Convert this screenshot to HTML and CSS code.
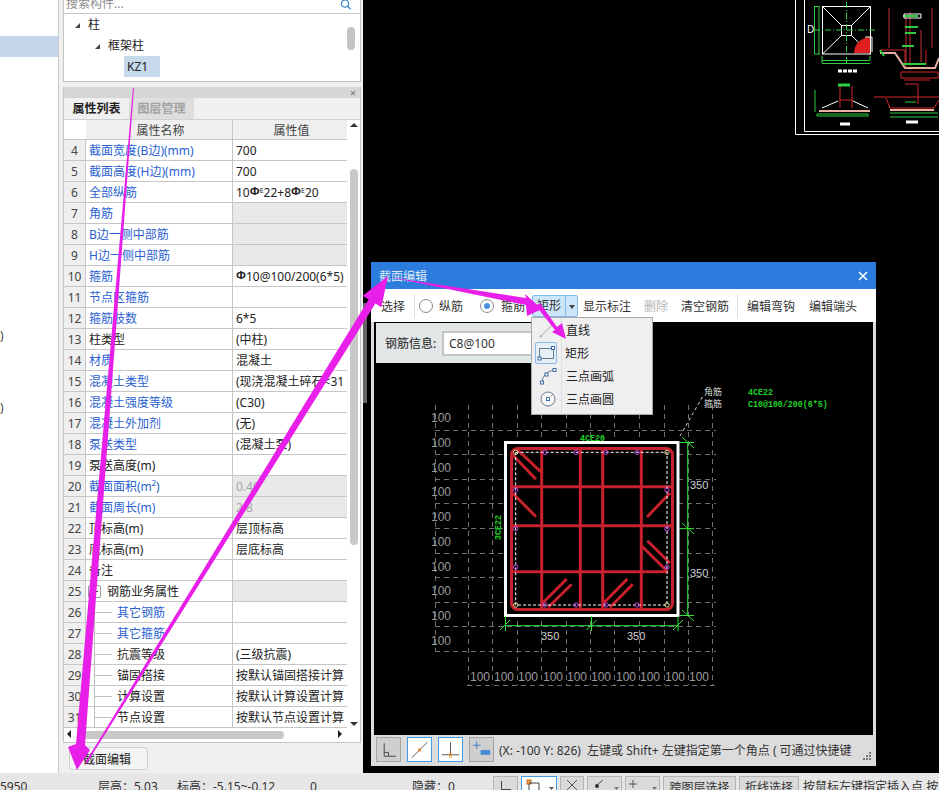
FILE: index.html
```html
<!DOCTYPE html>
<html lang="zh">
<head>
<meta charset="utf-8">
<title>截面编辑</title>
<link rel="stylesheet" href="styles.css">
</head>
<body>
<div class="app">
  <div class="main">
    <div class="nav">
      <div class="nav-sel"></div>
      <div class="nav-frag nav-frag-a">)</div>
      <div class="nav-frag nav-frag-b">)</div>
    </div>
    <div class="side">
      <div class="tree-panel">
        <div class="search">
          <span class="search-text">搜索构件...</span>
          <svg class="search-icon" width="12" height="12" viewBox="0 0 12 12"><circle cx="5" cy="3.5" r="3.6" fill="none" stroke="#3f8ad0" stroke-width="1.3"/><path d="M7.6 6.2 10.5 9" stroke="#3f8ad0" stroke-width="1.5"/></svg>
        </div>
        <div class="tree-row tree-l1"><span class="tri"></span>柱</div>
        <div class="tree-row tree-l2"><span class="tri"></span>框架柱</div>
        <div class="tree-row tree-l3"><span class="tree-sel">KZ1</span></div>
        <div class="tree-thumb"></div>
      </div>
      <div class="prop-panel">
        <div class="prop-head"><span class="prop-close">×</span></div>
        <div class="tabs"><div class="tab tab-on">属性列表</div><div class="tab">图层管理</div></div>
        <div class="grid-wrap">
          <div class="grid">
            <div class="row head"><div class="n"></div><div class="k">属性名称</div><div class="v">属性值</div></div>
            <div class="row"><div class="n">4</div><div class="k blue">截面宽度(B边)(mm)</div><div class="v">700</div></div>
            <div class="row"><div class="n">5</div><div class="k blue">截面高度(H边)(mm)</div><div class="v">700</div></div>
            <div class="row"><div class="n">6</div><div class="k blue">全部纵筋</div><div class="v">10<span class="bar">Φ</span><sup class="e">E</sup>22+8<span class="bar">Φ</span><sup class="e">E</sup>20</div></div>
            <div class="row"><div class="n">7</div><div class="k blue">角筋</div><div class="v off"></div></div>
            <div class="row"><div class="n">8</div><div class="k blue">B边一侧中部筋</div><div class="v off"></div></div>
            <div class="row"><div class="n">9</div><div class="k blue">H边一侧中部筋</div><div class="v off"></div></div>
            <div class="row"><div class="n">10</div><div class="k blue">箍筋</div><div class="v"><span class="bar">Φ</span>10@100/200(6*5)</div></div>
            <div class="row"><div class="n">11</div><div class="k blue">节点区箍筋</div><div class="v"></div></div>
            <div class="row"><div class="n">12</div><div class="k blue">箍筋肢数</div><div class="v">6*5</div></div>
            <div class="row"><div class="n">13</div><div class="k">柱类型</div><div class="v">(中柱)</div></div>
            <div class="row"><div class="n">14</div><div class="k blue">材质</div><div class="v">混凝土</div></div>
            <div class="row"><div class="n">15</div><div class="k blue">混凝土类型</div><div class="v">(现浇混凝土碎石&lt;31</div></div>
            <div class="row"><div class="n">16</div><div class="k blue">混凝土强度等级</div><div class="v">(C30)</div></div>
            <div class="row"><div class="n">17</div><div class="k blue">混凝土外加剂</div><div class="v">(无)</div></div>
            <div class="row"><div class="n">18</div><div class="k blue">泵送类型</div><div class="v">(混凝土泵)</div></div>
            <div class="row"><div class="n">19</div><div class="k">泵送高度(m)</div><div class="v"></div></div>
            <div class="row"><div class="n">20</div><div class="k blue">截面面积(m²)</div><div class="v off dim">0.49</div></div>
            <div class="row"><div class="n">21</div><div class="k blue">截面周长(m)</div><div class="v off dim">2.8</div></div>
            <div class="row"><div class="n">22</div><div class="k">顶标高(m)</div><div class="v">层顶标高</div></div>
            <div class="row"><div class="n">23</div><div class="k">底标高(m)</div><div class="v">层底标高</div></div>
            <div class="row"><div class="n">24</div><div class="k">备注</div><div class="v"></div></div>
            <div class="row"><div class="n">25</div><div class="k group"><span class="minus"></span>钢筋业务属性</div><div class="v off"></div></div>
            <div class="row"><div class="n">26</div><div class="k sub blue">其它钢筋</div><div class="v"></div></div>
            <div class="row"><div class="n">27</div><div class="k sub blue">其它箍筋</div><div class="v"></div></div>
            <div class="row"><div class="n">28</div><div class="k sub">抗震等级</div><div class="v">(三级抗震)</div></div>
            <div class="row"><div class="n">29</div><div class="k sub">锚固搭接</div><div class="v">按默认锚固搭接计算</div></div>
            <div class="row"><div class="n">30</div><div class="k sub">计算设置</div><div class="v">按默认计算设置计算</div></div>
            <div class="row"><div class="n">31</div><div class="k sub">节点设置</div><div class="v">按默认节点设置计算</div></div>
          </div>
          <div class="vbar">
            <span class="up"></span>
            <div class="vthumb"></div>
            <span class="down"></span>
          </div>
        </div>
        <div class="hbar">
          <span class="left"></span>
          <div class="hthumb"></div>
          <span class="right"></span>
        </div>
      </div>
      <div class="btn-row"><button class="sec-btn">截面编辑</button></div>
    </div>
    <div class="canvas">
      <div class="handle"></div>
      <svg class="cad" width="144" height="136" viewBox="795 0 144 136">
        <path d="M795.5 0V134.5H939M804.5 0V131.5H939" fill="none" stroke="#fff"/>
        <rect x="822.5" y="6.5" width="48" height="47.5" fill="none" stroke="#fff"/>
        <rect x="841.500" y="25.500" width="10" height="10" fill="none" stroke="#fff"/>
        <path d="M822.5 6.5 841.5 25.5M870.5 6.5 851.5 25.5M822.5 54 841.5 35.5M870.5 54 851.5 35.5" stroke="#fff" fill="none"/>
        <path d="M814 30H875M846.5 2V64" stroke="#2ecc40" stroke-dasharray="6 2 1 2"/>
        <path d="M814 6.5H820M814 54H820M814.5 6V54M819 6V54M822 60.5H870V56M822 63.500H870M822 56V63" stroke="#2ecc40" fill="none"/>
        <path d="M854 53Q855 39 870 37V53Z" fill="#e02020"/>
        <path d="M865 37H872V52" stroke="#fff" fill="none"/>
        <text x="807" y="33" class="cad-t">D</text>
        <path d="M838 71H858" stroke="#fff" stroke-width="3" stroke-dasharray="4 1"/>
        <path d="M889 8V48M932 8V48" stroke="#c03030" fill="none"/>
        <path d="M880 53H895L905 68H935L939 58" stroke="#e8b0a0" stroke-width="2" fill="none"/>
        <path d="M880 50H905V64M926 50V64" stroke="#d02828" fill="none"/>
        <path d="M906 15V68M910 12V66M921 30V62" stroke="#c03030"/>
        <path d="M903 16H918M905 27H918M905 33H916M902 46H914M903 64H926M880 50 884 56" stroke="#2ecc40" stroke-width="2"/>
        <path d="M901 72H938V78H901ZM904 80H930" stroke="#d02828" fill="none"/>
        <path d="M904 14H921V18H904Z" fill="none" stroke="#fff"/>
        <path d="M840 86V108M852 86V108M839 100H853" stroke="#d02828" fill="none"/>
        <path d="M838 85H850" stroke="#2ecc40" stroke-width="3"/>
        <path d="M822 108 838 101M853 101 868 108" stroke="#fff" fill="none"/>
        <path d="M819 111H870" stroke="#e8b0a0" stroke-width="2"/>
        <path d="M817 114H868V116H817ZM815 90V112" fill="none" stroke="#2ecc40"/>
        <path d="M874 97H939M886 98 890 108H934L939 100" stroke="#d02828" fill="none"/>
        <path d="M890 110H934" stroke="#e8b0a0" stroke-width="2" fill="none"/>
        <path d="M890 113H938M890 117H938M905 102H916" stroke="#2ecc40"/>
        <path d="M905 84H918V104" stroke="#d02828" fill="none"/>
        <path d="M840 124H850M906 122H918" stroke="#fff" stroke-width="3"/>
      </svg>
      <div class="dialog">
        <div class="d-title"><span>截面编辑</span><svg class="d-x" width="10" height="10" viewBox="0 0 10 10"><path d="M1 1 9 9M9 1 1 9" stroke="#fff" stroke-width="1.6"/></svg></div>
        <div class="d-tools">
          <span class="tool t-sel">选择</span>
          <span class="vsep"></span>
          <span class="radio"></span><span class="tool t-z">纵筋</span>
          <span class="radio radio-on"></span><span class="tool t-g">箍筋</span>
          <span class="split"><span class="split-main">矩形</span><span class="split-arrow"></span></span>
          <span class="tool t-show">显示标注</span>
          <span class="tool t-del">删除</span>
          <span class="tool t-clear">清空钢筋</span>
          <span class="vsep vsep-b"></span>
          <span class="tool t-hook">编辑弯钩</span>
          <span class="tool t-end">编辑端头</span>
        </div>
        <div class="d-canvas">
          <div class="info"><span class="info-l">钢筋信息:</span><span class="info-i">C8@100</span></div>
          <svg class="section" width="499" height="413" viewBox="374 321 499 413">
            <g class="gridl">
              <path d="M435 430.500H716M435 454.500H716M435 479.500H716M435 503.500H716M435 528.500H716M435 553.500H716M435 577.500H716M435 602.500H716M435 626.500H716M435 651.500H716"/>
              <path d="M435.500 405V651M468.500 405V685M492.500 405V685M517.500 405V685M541.500 405V685M566.500 405V685M590.500 405V685M614.500 405V685M639.500 405V685M664.500 405V685M688.500 405V685M712.500 405V685"/>
              <path d="M467 685.500H716"/>
            </g>
            <g class="lbl">
              <text x="431" y="422">100</text><text x="431" y="447">100</text><text x="431" y="472">100</text><text x="431" y="496">100</text><text x="431" y="521">100</text><text x="431" y="546">100</text><text x="431" y="571">100</text><text x="431" y="595">100</text><text x="431" y="620">100</text><text x="431" y="645">100</text>
              <text x="470" y="681">100</text><text x="494" y="681">100</text><text x="518" y="681">100</text><text x="543" y="681">100</text><text x="567" y="681">100</text><text x="591" y="681">100</text><text x="616" y="681">100</text><text x="640" y="681">100</text><text x="665" y="681">100</text><text x="689" y="681">100</text>
            </g>
            <rect x="505.5" y="442.5" width="172.5" height="173" fill="#000" stroke="#fff" stroke-width="3"/>
            <rect x="511.5" y="448.5" width="161" height="161" rx="6" fill="none" stroke="#c8202c" stroke-width="3"/>
            <g class="bar-red">
              <path d="M541.7 449V609M580.3 449V609M602.7 449V609M641.3 449V609"/>
              <path d="M512 486.7H672M512 525.7H672M512 571.7H668"/>
              <path d="M517.7 450 540.7 471.7M512.7 455 536 479.3M512.7 493.3 536 516.7M670 493 647 517M641.7 546 666.7 570.7M647.3 540.7 670 563M566.7 579 541.7 604M571.7 584.3 548.3 607.3M627.3 579 602.7 604M632.7 584.3 610 607.3"/>
            </g>
            <rect x="515.7" y="452.3" width="151.3" height="152.7" fill="none" stroke="#fff" stroke-dasharray="3 2"/>
            <g class="dot">
              <circle cx="545" cy="452.3" r="2.2"/><circle cx="576" cy="452.3" r="2.2"/><circle cx="606" cy="452.3" r="2.2"/><circle cx="637" cy="452.3" r="2.2"/>
              <circle cx="545" cy="605" r="2.2"/><circle cx="576" cy="605" r="2.2"/><circle cx="606" cy="605" r="2.2"/><circle cx="637" cy="605" r="2.2"/>
              <circle cx="515.7" cy="490" r="2.2"/><circle cx="515.7" cy="528.7" r="2.2"/><circle cx="515.7" cy="567" r="2.2"/>
              <circle cx="667" cy="490" r="2.2"/><circle cx="667" cy="528.7" r="2.2"/><circle cx="667" cy="567" r="2.2"/>
            </g>
            <g class="dot-y">
              <circle cx="515.7" cy="452.3" r="2.2"/><circle cx="667" cy="452.3" r="2.2"/><circle cx="515.7" cy="605" r="2.2"/><circle cx="667" cy="605" r="2.2"/>
            </g>
            <g class="dim-g">
              <path d="M687.7 442V616M680 442.5H694M680 528.7H694M680 615.5H694M682 437 694 448M682 523 694 534M682 610 694 621"/>
              <path d="M505 625.7H678M505.5 616V631M591.5 616V631M678 616V631M500 630 510 620M586.5 630 596.5 620M673 630 683 620"/>
            </g>
            <g class="lbl lbl-d">
              <text x="690" y="489">350</text><text x="690" y="577">350</text><text x="541" y="640">350</text><text x="627" y="640">350</text>
            </g>
            <text x="580" y="441" class="gt">4CE20</text>
            <text x="0" y="0" class="gt" transform="translate(501 540) rotate(-90)">3CE22</text>
            <path d="M680 436 703 396" stroke="#ddd" stroke-dasharray="3 3" fill="none"/>
            <text x="704" y="395" class="wt">角筋</text>
            <text x="704" y="407" class="wt">箍筋</text>
            <text x="748" y="395" class="gt">4CE22</text>
            <text x="748" y="407" class="gt">C10@100/200(6*5)</text>
          </svg>
          <div class="menu">
            <div class="mi"><svg class="mi-ic" width="20" height="20" viewBox="0 0 20 20"><path d="M3 16 16 3" stroke="#c4c4c4" stroke-width="1.2"/><rect x="1.5" y="15" width="2.5" height="2.5" fill="#bbb"/></svg><span>直线</span></div>
            <div class="mi"><span class="mi-on"><svg width="20" height="20" viewBox="0 0 20 20"><rect x="3.5" y="5.5" width="14" height="10" fill="none" stroke="#6a7d90"/><rect x="15.5" y="3.5" width="3" height="3" fill="#fff" stroke="#3f6ea8"/><rect x="2" y="14" width="3" height="3" fill="#fff" stroke="#3f6ea8"/></svg></span><span>矩形</span></div>
            <div class="mi"><svg class="mi-ic" width="20" height="20" viewBox="0 0 20 20"><path d="M4 16Q5 6 16 4" fill="none" stroke="#6a7d90"/><rect x="2.5" y="15" width="3" height="3" fill="#fff" stroke="#3f6ea8"/><rect x="7" y="7" width="3" height="3" fill="#fff" stroke="#3f6ea8"/><rect x="15" y="2.5" width="3" height="3" fill="#fff" stroke="#3f6ea8"/></svg><span>三点画弧</span></div>
            <div class="mi"><svg class="mi-ic" width="20" height="20" viewBox="0 0 20 20"><circle cx="10" cy="10" r="7" fill="#f8f8f8" stroke="#6a7d90"/><rect x="8.5" y="8.5" width="3" height="3" fill="#fff" stroke="#3f6ea8"/><path d="M11 9 15 5" stroke="#999"/></svg><span>三点画圆</span></div>
          </div>
        </div>
        <div class="d-foot">
          <span class="f-btn"><svg width="24" height="24" viewBox="0 0 24 24"><path d="M7.5 5V18.5H20M7.5 14.5H12V18.5" fill="none" stroke="#444"/></svg></span>
          <span class="f-btn f-on"><svg width="24" height="24" viewBox="0 0 24 24"><path d="M4 20 20 4" stroke="#555"/><rect x="10.5" y="10.5" width="3" height="3" fill="#e08a3c"/></svg></span>
          <span class="f-btn f-on"><svg width="24" height="24" viewBox="0 0 24 24"><path d="M12 4V18M3 17H21" stroke="#555"/><rect x="10.5" y="15.5" width="3" height="3" fill="#e08a3c"/><rect x="10.5" y="18.5" width="3" height="2" fill="#f6d0a0"/></svg></span>
          <span class="f-btn"><svg width="24" height="24" viewBox="0 0 24 24"><path d="M7 3V11M3 7H11" stroke="#3f7cc0"/><rect x="11" y="12" width="10" height="5" fill="#4a8cd4"/></svg></span>
          <span class="f-text">(X: -100 Y: 826)&nbsp; 左键或 Shift+ 左键指定第一个角点 ( 可通过快捷键</span>
          <svg class="grip" width="9" height="9" viewBox="0 0 9 9"><path d="M6 0h2v2H6zM3 3h2v2H3zM6 3h2v2H6zM0 6h2v2H0zM3 6h2v2H3zM6 6h2v2H6z" fill="#777"/></svg>
        </div>
      </div>
    </div>
  </div>
  <div class="status">
    <span class="s s-a">5950</span>
    <span class="s s-b">层高：5.03</span>
    <span class="s s-c">标高：-5.15~-0.12</span>
    <span class="s s-d">0</span>
    <span class="s s-e">隐藏：0</span>
    <span class="s-btn sb-1"><svg width="14" height="14" viewBox="0 0 14 14"><path d="M2.5 2V10.500H12" fill="none" stroke="#444"/></svg></span>
    <span class="s-btn sb-2"><svg width="32" height="14" viewBox="0 0 32 14"><rect x="4" y="1" width="4" height="4" fill="#f4a050" stroke="#c06a20"/><path d="M6 5V14M6 4H16V14" fill="none" stroke="#444"/><path d="M26 8H31L28.500 11Z" fill="#555"/></svg></span>
    <span class="s-btn sb-3"><svg width="14" height="14" viewBox="0 0 14 14"><path d="M2 1 12 11M12 1 2 11" stroke="#555"/></svg></span>
    <span class="s-btn sb-4"><svg width="34" height="14" viewBox="0 0 34 14"><path d="M9 6 15 1" stroke="#555"/><circle cx="9" cy="7" r="2" fill="#333"/><path d="M26 8H31L28.500 11Z" fill="#777"/></svg></span>
    <span class="s-btn sb-5"><svg width="34" height="14" viewBox="0 0 34 14"><path d="M7 1V9M3 5H11" stroke="#555"/><path d="M26 8H31L28.500 11Z" fill="#777"/></svg></span>
    <span class="s-btn sb-6">跨图层选择</span>
    <span class="s-btn sb-7">折线选择</span>
    <span class="s s-f">按鼠标左键指定插入点,按</span>
  </div>
  <svg class="arrows" width="939" height="790" viewBox="0 0 939 790">
    <path d="M133 88H134L85 745 90 750 77 770 68 747 76 744Z"/>
    <path d="M85 763 368.600 299.400 362.700 295.700 388 276 381.300 307.300 375.400 303.600 87 763Z"/>
    <path d="M389 277 526 298 525 294 542 309 527 316 526 305Z"/>
    <path d="M536 306 540 303 557 327 562 323 566 339 552 332 555 330Z"/>
  </svg>
</div>
</body>
</html>
```

FILE: styles.css
```css
* { box-sizing: border-box; }
html, body { margin: 0; padding: 0; }
body { font-family: "Noto Sans", "Noto Sans CJK SC", sans-serif; font-size: 12px; color: #222; }
.app { position: relative; width: 939px; height: 790px; overflow: hidden; display: flex; flex-direction: column; background: #000; }
.main { display: flex; height: 773px; }

.nav { position: relative; width: 59px; background: #fff; border-right: 1px solid #c9c9c9; flex: none; }
.nav-sel { margin-top: 36px; height: 21px; background: #c5d6ea; }
.nav-frag { position: absolute; left: 0; color: #444; }
.nav-frag-a { top: 327px; }
.nav-frag-b { top: 399px; }

.side { width: 304px; flex: none; background: #f0f0f0; padding-left: 4px; display: flex; flex-direction: column; }
.tree-panel { position: relative; width: 298px; height: 82px; background: #fff; border: 1px solid #c4c4c4; border-top: 0; }
.search { display: flex; justify-content: space-between; height: 14px; padding: 0 8px 0 2px; border-bottom: 1px solid #c8c8c8; overflow: hidden; }
.search-text { color: #8b8b8b; line-height: 10px; margin-top: -1px; }
.tree-row { height: 21px; line-height: 21px; display: flex; align-items: center; color: #222; }
.tree-l1 { padding-left: 11px; }
.tree-l2 { padding-left: 31px; }
.tree-l3 { padding-left: 60px; }
.tri { width: 0; height: 0; border-left: 5px solid transparent; border-bottom: 5px solid #444; margin: 2px 8px 0 0; }
.tree-sel { width: 36px; height: 21px; background: #c9d9ec; padding-left: 3px; }
.tree-thumb { position: absolute; left: 283px; top: 27px; width: 8px; height: 23px; border-radius: 4px; background: #c4c4c4; }

.prop-panel { width: 298px; height: 656px; margin-top: 5px; background: #fff; border: 1px solid #c4c4c4; border-top: 0; display: flex; flex-direction: column; }
.prop-head { height: 11px; background: #d6d6d6; display: flex; justify-content: flex-end; padding-right: 4px; }
.prop-close { color: #777; font-size: 11px; line-height: 11px; }
.tabs { display: flex; height: 22px; background: #f0f0f0; border-bottom: 1px solid #d0d0d0; }
.tab { width: 65px; line-height: 22px; text-align: center; color: #a2a2a2; font-weight: 700; background: #dedede; }
.tab-on { color: #222; background: #f0f0f0; }
.grid-wrap { display: flex; height: 608px; overflow: hidden; }
.grid { width: 283px; flex: none; }
.row { display: flex; height: 21px; line-height: 22px; border-bottom: 1px solid #c6c6c6; background: #fff; }
.row .n { width: 22px; flex: none; text-align: center; background: #efefef; color: #444; border-right: 1px solid #c6c6c6; font-size: 12px; }
.row .k { width: 147px; flex: none; padding-left: 3px; white-space: nowrap; border-right: 1px solid #c6c6c6; }
.row .v { flex: 1; min-width: 0; padding-left: 3px; white-space: nowrap; overflow: hidden; }
.row .blue { color: #2a5fd0; }
.row .off { background: #e9e9e9; }
.row .dim { color: #a6a6a6; }
.bar { font-size: 11px; position: relative; top: -2px; font-weight: 700; }
.e { font-size: 7px; line-height: 0; vertical-align: 4px; }
.head { height: 20px; line-height: 21px; }
.head .n { background: #fff; border-right: 0; }
.head .k, .head .v { text-align: center; background: #efefef; color: #444; }
.k.group { position: relative; padding-left: 21px; }
.minus { position: absolute; left: 2px; top: 4px; width: 13px; height: 13px; background: #fff; border: 1px solid #999; border-radius: 2px; }
.minus::after { content: ""; position: absolute; left: 2px; top: 5px; width: 7px; height: 1px; background: #333; }
.k.sub { position: relative; padding-left: 31px; }
.k.sub::before { content: ""; position: absolute; left: 8px; top: 0; bottom: -1px; width: 1px; background: #c0c0c0; }
.k.sub::after { content: ""; position: absolute; left: 9px; top: 10px; width: 17px; height: 1px; background: #c0c0c0; }

.vbar { position: relative; flex: 1; background: #fff; }
.vbar .up { position: absolute; left: 3px; top: 3px; border: 4px solid transparent; border-bottom: 4px solid #333; border-top: 0; }
.vbar .down { position: absolute; left: 3px; bottom: 2px; border: 4px solid transparent; border-top: 4px solid #333; border-bottom: 0; }
.vthumb { position: absolute; left: 3px; top: 49px; width: 8px; height: 376px; border-radius: 4px; background: #c8c8c8; }
.hbar { flex: 1; position: relative; background: #fff; }
.hthumb { position: absolute; left: 15px; top: 3px; width: 205px; height: 8px; border-radius: 4px; background: #c8c8c8; }
.hbar .left { position: absolute; left: 3px; top: 2px; border: 4px solid transparent; border-right: 4px solid #222; border-left: 0; }
.hbar .right { position: absolute; right: 18px; top: 2px; border: 4px solid transparent; border-left: 4px solid #222; border-right: 0; }
.btn-row { padding: 4px 0 0 6px; }
.sec-btn { width: 79px; height: 23px; padding: 0 3px 0 0; font: inherit; color: #222; background: #f4f4f4; border: 1px solid #d0d0d0; border-radius: 3px; }

.canvas { position: relative; flex: 1; background: #000; }
.handle { position: absolute; left: 0; top: 303px; width: 4px; height: 100px; background: #666; }
.cad { position: absolute; top: 0; right: 0; }
.cad-t { fill: #fff; font-size: 10px; }

.dialog { position: absolute; left: 8px; top: 262px; width: 505px; height: 504px; background: #dcdcdc; display: flex; flex-direction: column; }
.d-title { height: 27px; flex: none; background: #2b7cdc; color: #dfeaf8; padding: 0 8px; display: flex; align-items: center; justify-content: space-between; }
.d-tools { height: 33px; flex: none; background: #fff; display: flex; align-items: center; color: #333; white-space: nowrap; }
.tool { flex: none; }
.t-sel { margin-left: 10px; }
.vsep { width: 1px; height: 24px; background: #ddd; margin-left: 9px; flex: none; }
.radio { width: 14px; height: 14px; border: 1px solid #888; border-radius: 50%; background: #fff; flex: none; margin-left: 4px; }
.radio-on { margin-left: 17px; position: relative; }
.radio-on::after { content: ""; position: absolute; left: 3px; top: 3px; width: 6px; height: 6px; border-radius: 50%; background: #4a90e2; }
.t-z { margin-left: 6px; }
.t-g { margin-left: 7px; }
.split { display: flex; height: 22px; width: 46px; margin-left: 7px; background: #cde5f8; border: 1px solid #84bbee; border-radius: 2px; flex: none; }
.split-main { width: 33px; text-align: center; line-height: 20px; color: #333; border-right: 1px solid #84bbee; }
.split-arrow { width: 0; height: 0; margin: 9px 0 0 3px; border: 3px solid transparent; border-top: 4px solid #444; border-bottom: 0; }
.t-show { margin-left: 5px; }
.t-del { margin-left: 13px; color: #b5b5b5; }
.t-clear { margin-left: 13px; }
.vsep-b { margin-left: 8px; }
.t-hook { margin-left: 9px; }
.t-end { margin-left: 14px; }

.d-canvas { position: relative; height: 413px; margin: 0 3px; flex: none; background: #000; }
.section { position: absolute; left: 0; top: -1px; }
.gridl path { stroke: #707070; stroke-width: 1; stroke-dasharray: 5 4; fill: none; }
.lbl text { fill: #9a9a9a; font-size: 12px; font-family: "Liberation Sans", sans-serif; }
.lbl-d text { fill: #d0d0d0; font-size: 11px; }
.bar-red path { stroke: #c8202c; stroke-width: 3; fill: none; }
.dot circle { fill: none; stroke: #c040e0; }
.dot-y circle { fill: none; stroke: #e8d890; }
.dim-g path { stroke: #36e03c; stroke-width: 1; fill: none; }
.gt { fill: #22d02a; font-size: 8.3px; font-family: "Liberation Mono", monospace; font-weight: 700; }
.wt { fill: #d8d8d8; font-size: 9px; }
.info { position: absolute; left: 2px; top: 1px; z-index: 1; width: 156px; height: 40px; background: #e1e6e6; display: flex; align-items: center; padding-left: 9px; overflow: hidden; }
.info-l { width: 57px; flex: none; color: #222; }
.info-i { flex: none; width: 120px; height: 25px; line-height: 22px; background: #fff; border: 2px solid #c4c4c4; padding-left: 5px; color: #333; font-size: 12px; }
.menu { position: absolute; left: 157px; top: -5px; z-index: 2; width: 122px; height: 98px; background: #efefef; border: 1px solid #a8a8a8; }
.menu::before { content: ""; position: absolute; left: 29px; top: 0; bottom: 0; width: 1px; background: #e0e0e0; }
.mi { display: flex; align-items: center; height: 23px; color: #222; }
.mi > span:last-child { margin-left: 5px; }
.mi-ic { flex: none; margin: 0 1px 0 4px; width: 24px; }
.mi-on { width: 22px; height: 22px; flex: none; margin: 0 3px; border: 1px solid #8bb8e8; border-radius: 2px; background: #e6eef6; display: flex; align-items: center; justify-content: center; }

.d-foot { flex: 1; position: relative; display: flex; align-items: center; gap: 6px; padding: 0 0 2px 5px; overflow: hidden; }
.f-btn { width: 25px; height: 25px; flex: none; background: #cfcfcf; border: 1px solid #a4a4a4; display: flex; align-items: center; justify-content: center; }
.f-on { background: #fff; border-color: #3f9bea; }
.f-text { margin-left: -1px; width: 355px; overflow: hidden; white-space: nowrap; color: #333; flex: none; }
.grip { position: absolute; right: 4px; bottom: 5px; }

.status { height: 17px; flex: none; background: #e6e6e6; display: flex; overflow: hidden; white-space: nowrap; color: #333; }
.s { line-height: 28px; flex: none; }
.s-a { width: 98px; }
.s-b { width: 79px; }
.s-c { width: 133px; }
.s-d { width: 102px; }
.s-e { width: 81px; }
.s-btn { flex: none; height: 20px; margin-top: 3px; margin-right: 3px; background: #dadada; border: 1px solid #b4b4b4; text-align: center; line-height: 22px; color: #333; }
.s-btn svg { display: block; margin: 2px auto 0; }
.sb-1 { width: 25px; }
.sb-2 { width: 36px; background: #fff; border-color: #3f9bea; }
.sb-3 { width: 24px; }
.sb-4 { width: 35px; }
.sb-5 { width: 35px; }
.sb-6 { width: 73px; }
.sb-7 { width: 60px; margin-right: 4px; }

.arrows { position: absolute; left: 0; top: 0; pointer-events: none; z-index: 5; }
.arrows path { fill: #e81fe8; }
```
